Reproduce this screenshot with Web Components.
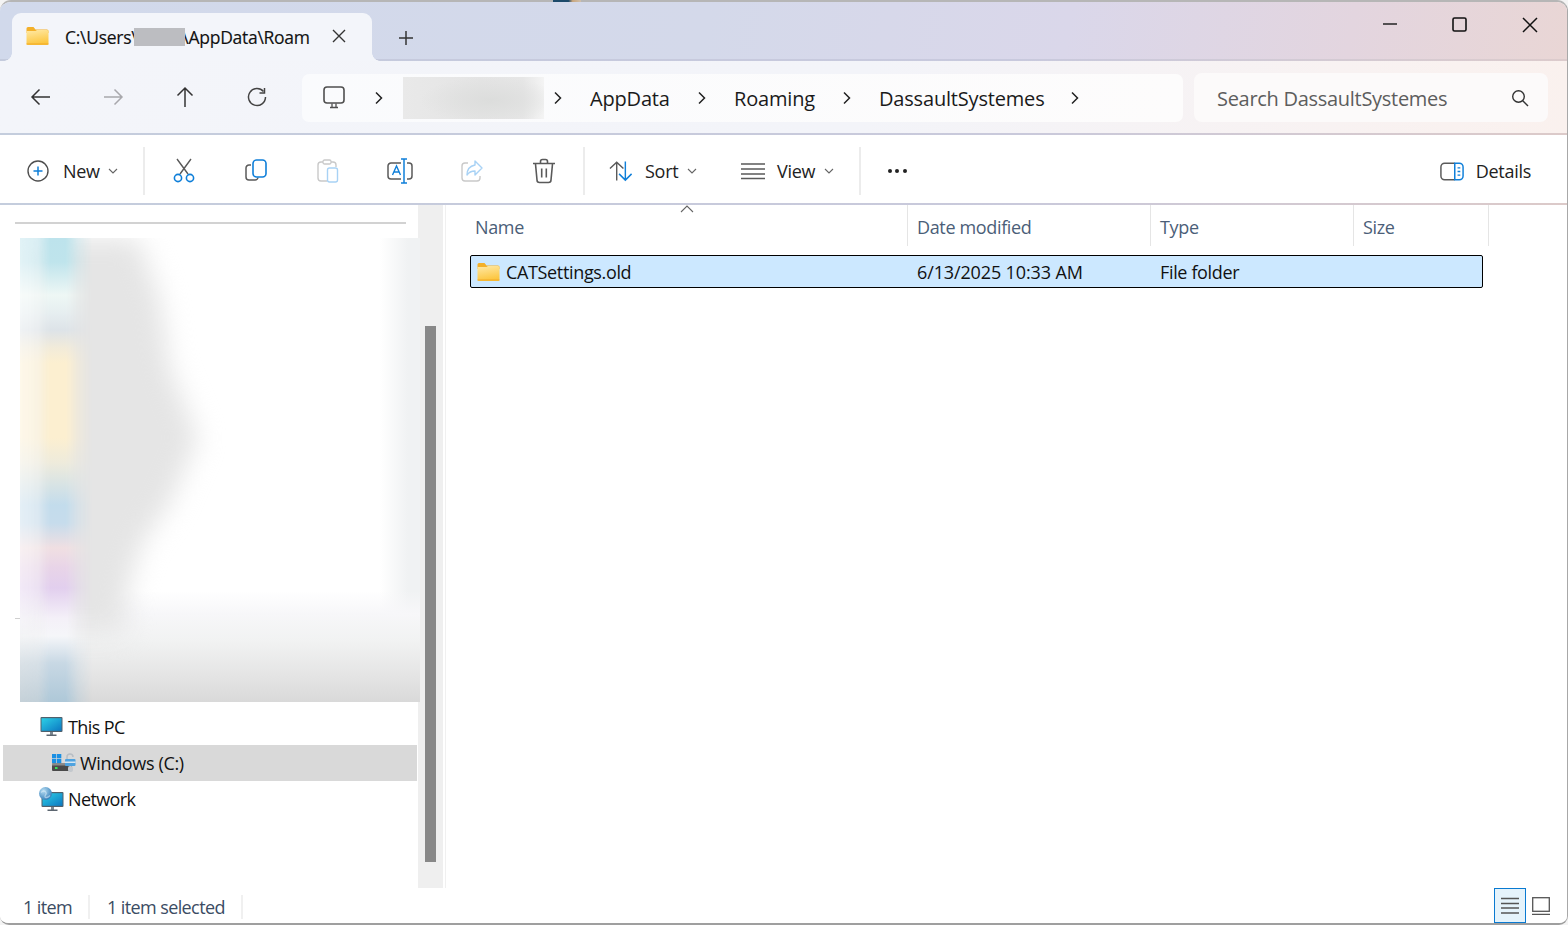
<!DOCTYPE html>
<html lang="en"><head><meta charset="utf-8"><title>File Explorer</title>
<style>
html,body{margin:0;padding:0;width:1568px;height:925px;overflow:hidden;background:#f4f4f4;font-family:"Open Sans","Noto Sans",sans-serif}
fm-peek{position:absolute;left:553px;top:0;width:28px;height:2px;z-index:5}
</style></head>
<body>
<fm-peek></fm-peek>
<fm-window>
  <fm-titlebar></fm-titlebar>
  <fm-navbar></fm-navbar>
  <fm-commandbar></fm-commandbar>
  <fm-main>
    <fm-sidebar></fm-sidebar>
    <fm-list></fm-list>
  </fm-main>
  <fm-status></fm-status>
</fm-window>
<script>
const FOLDER=(w,h,id)=>`<svg width="${w}" height="${h}" viewBox="0 0 22 18"><defs><linearGradient id="${id}" x1="0" y1="0" x2="0.25" y2="1"><stop offset="0" stop-color="#ffe9a6"/><stop offset="1" stop-color="#fcc63f"/></linearGradient></defs><path d="M0 1.5A1.5 1.5 0 0 1 1.5 0H7l2 2.5h11.5A1.5 1.5 0 0 1 22 4v2H0z" fill="#f3b02a"/><path d="M0 4h9l1.5-1H20.500A1.500 1.500 0 0 1 22 4.500V16.500A1.500 1.500 0 0 1 20.500 18H1.500A1.500 1.500 0 0 1 0 16.500z" fill="url(#${id})"/><path d="M0 17h22" stroke="#f0a928" stroke-width="1"/></svg>`;
const G='#5a5a5a',B='#0f7fd9',LG='#c9c9c9',LB='#a8d2f5';
const ICON={
 back:`<svg width="22" height="20" viewBox="0 0 22 20" fill="none" stroke="#333" stroke-width="1.500"><path d="M20 10H2M9.500 2.500 2 10l7.500 7.500"/></svg>`,
 fwd:`<svg width="22" height="20" viewBox="0 0 22 20" fill="none" stroke="#a8a8ac" stroke-width="1.500"><path d="M2 10h18M12.500 2.500 20 10l-7.500 7.500"/></svg>`,
 up:`<svg width="20" height="22" viewBox="0 0 20 22" fill="none" stroke="#333" stroke-width="1.500"><path d="M10 21V2M2.500 9.500 10 2l7.500 7.500"/></svg>`,
 refresh:`<svg width="20" height="20" viewBox="0 0 20 20" fill="none" stroke="#444" stroke-width="1.500"><path d="M16.500 4.500A8.500 8.500 0 1 0 18.500 10"/><path d="M17.500 1v5h-5"/></svg>`,
 monitor:`<svg width="24" height="24" viewBox="0 0 24 24" fill="none" stroke="#4f4f4f" stroke-width="1.600"><rect x="2" y="2" width="20" height="16" rx="3"/><path d="M8 22.500h8M10 18.500v4M14 18.500v4" stroke-width="1.300"/></svg>`,
 plus:`<svg width="22" height="22" viewBox="0 0 22 22" fill="none"><circle cx="11" cy="11" r="10" stroke="#4f4f4f" stroke-width="1.400"/><path d="M11 6.500v9M6.500 11h9" stroke="${B}" stroke-width="1.500"/></svg>`,
 cut:`<svg width="22" height="26" viewBox="0 0 22 26" fill="none" stroke-width="1.400"><path d="M4 1l11 15M18 1 7 16" stroke="${G}"/><circle cx="5" cy="20" r="3.600" stroke="${B}" stroke-width="1.600"/><circle cx="17" cy="20" r="3.600" stroke="${B}" stroke-width="1.600"/></svg>`,
 copy:`<svg width="22" height="24" viewBox="0 0 22 24" fill="none"><path d="M6 6H4a3 3 0 0 0-3 3v9a3 3 0 0 0 3 3h6a3 3 0 0 0 3-2.500" stroke="${G}" stroke-width="1.500"/><rect x="8" y="1" width="13" height="17" rx="3.500" stroke="${B}" stroke-width="1.600"/></svg>`,
 paste:`<svg width="22" height="24" viewBox="0 0 22 24" fill="none"><path d="M10 22H4a3 3 0 0 1-3-3V6a3 3 0 0 1 3-3h12a3 3 0 0 1 3 3v2" stroke="${LG}" stroke-width="1.400"/><rect x="6" y="1" width="8" height="4" rx="1.500" fill="#fff" stroke="${LG}" stroke-width="1.300"/><rect x="10.500" y="9" width="10" height="14" rx="2" stroke="${LB}" stroke-width="1.400"/></svg>`,
 rename:`<svg width="26" height="26" viewBox="0 0 26 26" fill="none"><path d="M14 5H4a3 3 0 0 0-3 3v10a3 3 0 0 0 3 3h10M20 5h2a3 3 0 0 1 3 3v10a3 3 0 0 1-3 3h-2" stroke="${G}" stroke-width="1.500"/><path d="M14 1h6M17 1v24M14 25h6" stroke="${B}" stroke-width="1.500"/><path d="M5.500 17 9.500 8l4 9M7 14h5" stroke="${B}" stroke-width="1.400"/></svg>`,
 share:`<svg width="24" height="24" viewBox="0 0 24 24" fill="none"><path d="M8 4H5a3 3 0 0 0-3 3v12a3 3 0 0 0 3 3h12a3 3 0 0 0 3-3v-2" stroke="${LG}" stroke-width="1.400"/><path d="M15 2l7 7-7 7v-4c-4 0-6 1-8 4 0-5 3-9 8-10z" stroke="${LB}" stroke-width="1.400" stroke-linejoin="round"/></svg>`,
 trash:`<svg width="24" height="26" viewBox="0 0 24 26" fill="none" stroke="${G}" stroke-width="1.600"><path d="M1 5.500h22M8.500 5V3.500a2 2 0 0 1 2-2h3a2 2 0 0 1 2 2V5M3.500 6l1.500 16a2.500 2.500 0 0 0 2.500 2.500h9a2.500 2.500 0 0 0 2.500-2.500L20.500 6M9.700 10.500v9M14.300 10.500v9"/></svg>`,
 sort:`<svg width="25" height="22" viewBox="0 0 26 22" fill="none" stroke-width="1.500"><path d="M8 21V2M1 8.500 8 2l7 6.500" stroke="${G}"/><path d="M17 1v19M10.500 14l6.500 6.500 6.500-6.500" stroke="${B}"/></svg>`,
 view:`<svg width="26" height="18" viewBox="0 0 26 18" fill="none" stroke="${G}" stroke-width="1.500"><path d="M1 2h24M1 7h24M1 12h24M1 16.500h24"/></svg>`,
 details:`<svg width="24" height="19" viewBox="0 0 26 20" fill="none"><path d="M16 1H5a4 4 0 0 0-4 4v10a4 4 0 0 0 4 4h11" stroke="${G}" stroke-width="1.600"/><path d="M16 1h5a4 4 0 0 1 4 4v10a4 4 0 0 1-4 4h-5z" stroke="${B}" stroke-width="1.600"/><path d="M19 6h3M19 10h3M19 14h3" stroke="${B}" stroke-width="1.400"/></svg>`,
 pc:`<svg width="24" height="20" viewBox="0 0 24 20"><defs><linearGradient id="pcg" x1="0" y1="0" x2="1" y2="1"><stop offset="0" stop-color="#2cd0e6"/><stop offset="1" stop-color="#0c78c2"/></linearGradient></defs><rect x=".500" y="0" width="22" height="15" rx="1" fill="#50606c"/><rect x="1.500" y="1.200" width="20" height="12.600" fill="url(#pcg)"/><rect x="10" y="15" width="3" height="3" fill="#7c8892"/><rect x="6.500" y="17.500" width="10" height="1.500" fill="#5c6670"/></svg>`,
 drive:`<svg width="25" height="20" viewBox="0 0 25 20"><g fill="#1a8fe3"><rect x="1" y="1" width="4.300" height="4.300"/><rect x="6" y="1" width="4.300" height="4.300"/><rect x="1" y="6" width="4.300" height="4.300"/><rect x="6" y="6" width="4.300" height="4.300"/></g><rect x="1" y="10.500" width="20" height="7.500" rx="1" fill="#4a4a4a"/><rect x="1" y="10.500" width="20" height="2" fill="#8a8a8a"/><rect x="4" y="14" width="2.500" height="2" fill="#3ddc5a"/><path d="M16 6V4a3 3 0 0 1 6 0" fill="none" stroke="#b8bec4" stroke-width="1.500"/><rect x="14" y="6" width="10.500" height="7" rx="1" fill="#4fa3e0"/><rect x="14" y="8.500" width="10.500" height="1.500" fill="#d6e6f2"/><rect x="17" y="13" width="5" height="6" rx="2" fill="#c3c8cd"/></svg>`,
 net:`<svg width="26" height="25" viewBox="0 0 26 25"><defs><linearGradient id="ng" x1="0" y1="0" x2="1" y2="1"><stop offset="0" stop-color="#2cd0e6"/><stop offset="1" stop-color="#0c78c2"/></linearGradient><radialGradient id="gl" cx=".35" cy=".3" r=".8"><stop offset="0" stop-color="#b5dcf2"/><stop offset="1" stop-color="#2a76b4"/></radialGradient></defs><rect x="2.500" y="5" width="22" height="15" rx="1" fill="#50606c"/><rect x="3.500" y="6.200" width="20" height="12.600" fill="url(#ng)"/><rect x="12" y="20" width="3" height="3" fill="#7c8892"/><rect x="8.500" y="22.500" width="10" height="1.500" fill="#5c6670"/><circle cx="6.500" cy="6.500" r="6.500" fill="url(#gl)"/><path d="M2 5.500c2-2 4-2 5 0s-1 2-1 4 3 1 5-1" fill="none" stroke="#dfeff9" stroke-opacity=".55" stroke-width="1.300"/></svg>`
};
const def=(name,html)=>{customElements.define(name,class extends HTMLElement{
  constructor(){super();this.attachShadow({mode:'open'}).innerHTML=typeof html==='function'?html(this):html;}
  connectedCallback(){if(typeof html==='function')this.shadowRoot.innerHTML=html(this);}
});};

def('fm-peek',`<style>:host{display:block;background:linear-gradient(90deg,#1d4a6a 0,#1d4a6a 55%,#c8a67e 70%,#d0c0ac 100%)}</style>`);

def('fm-window',`<style>:host{display:flex;flex-direction:column;box-sizing:border-box;width:1568px;height:925px;background:#fff;border-top:2px solid #b6b6b6;border-right:1px solid #a8a8a8;border-bottom:2px solid #9f9f9f;border-radius:11px 11px 9px 9px;overflow:hidden;color:#1a1a1a;font-family:"Open Sans","Noto Sans",sans-serif}</style><slot></slot>`);

def('fm-titlebar',`<style>
:host{display:flex;box-sizing:border-box;height:59px;flex:none;padding:11px 0 0 12px;align-items:stretch;background:linear-gradient(100deg,#d1d9eb 0%,#d4d9ea 45%,#dad7ea 68%,#e3d5df 86%,#e9d6d5 100%);border-bottom:2px solid;border-image:linear-gradient(90deg,#c4cbdd,#c8c9dd 65%,#dccbcc) 1;position:relative;z-index:1}
.tab{display:flex;align-items:center;box-sizing:border-box;width:360px;height:48px;margin-bottom:-2px;padding:0 0 2px 14px;background:#f3f5fa;border-radius:9px 9px 0 0;position:relative}
.tab::before,.tab::after{content:"";position:absolute;bottom:0;width:8px;height:8px}
.tab::before{left:-8px;background:radial-gradient(circle at 0 0,transparent 7.500px,#f3f5fa 8px)}
.tab::after{right:-8px;background:radial-gradient(circle at 100% 0,transparent 7.500px,#f3f5fa 8px)}
.title{width:246px;margin:2px 0 0 16px;white-space:nowrap;font-size:17.500px;letter-spacing:-.28px;color:#111;display:flex;align-items:center;-webkit-text-stroke:.15px #111}
.red{flex:none;display:inline-block;width:51px;height:18px;background:#bcbdc1;margin:0 -3px 0 -3px;position:relative}
.x{margin-left:21px;display:flex}
.new{display:flex;margin:4px 0 0 26px;align-self:center}
.caps{margin-left:auto;display:flex;align-self:flex-start;margin-top:-11px;padding-right:2px}
.cap{width:70px;height:46px;display:flex;align-items:center;justify-content:center}
</style>
<div class="tab">${FOLDER(23,18,'fa')}<span class="title">C:\\Users\\<span class="red"></span>\\AppData\\Roam</span>
<svg class="x" width="14" height="14" viewBox="0 0 14 14" fill="none" stroke="#333" stroke-width="1.400"><path d="M1 1l12 12M13 1 1 13"/></svg></div>
<svg class="new" width="16" height="16" viewBox="0 0 16 16" fill="none" stroke="#333" stroke-width="1.500"><path d="M8 1v14M1 8h14"/></svg>
<div class="caps">
<div class="cap"><svg width="16" height="2" viewBox="0 0 16 2" style="margin-top:-2px"><path d="M1 1h14" stroke="#222" stroke-width="1.500"/></svg></div>
<div class="cap"><svg width="15" height="15" viewBox="0 0 15 15" fill="none" style="margin:-1px 2px 0 0"><rect x="1" y="1" width="13" height="13" rx="1.500" stroke="#111" stroke-width="1.600"/></svg></div>
<div class="cap"><svg width="16" height="16" viewBox="0 0 16 16" fill="none" style="margin-top:-1px"><path d="M1 1l14 14M15 1 1 15" stroke="#111" stroke-width="1.500"/></svg></div>
</div>`);

def('fm-navbtn',h=>`<style>:host{display:flex;flex:none;width:72px;height:100%;align-items:center;justify-content:center}</style>${ICON[h.getAttribute('icon')]||''}`);

const CHEV=`<svg width="10" height="14" viewBox="0 0 10 14" fill="none" stroke="#222" stroke-width="1.500"><path d="M2 1.500 7.500 7 2 12.500"/></svg>`;
def('fm-crumb',h=>`<style>:host{display:flex;flex:none;box-sizing:border-box;align-items:center;justify-content:space-between;height:100%;font-size:20px;letter-spacing:-.18px;color:#1a1a1a;padding-right:var(--pr,27px)}</style><span><slot></slot></span>${CHEV}`);

def('fm-navbar',`<style>
:host{display:flex;flex:none;box-sizing:border-box;height:74px;padding:0 0 0 5px;align-items:center;background:linear-gradient(100deg,#f3f5fa 0%,#f3f4f9 55%,#f8f2f2 85%,#faf1ee 100%);border-bottom:2px solid;border-image:linear-gradient(90deg,#c4cddd,#c9c9db 65%,#dccac9) 1}
.btns{display:flex;height:100%}
.addr{display:flex;align-items:center;box-sizing:border-box;width:881px;height:48px;margin:2px 0 0 9px;background:linear-gradient(90deg,#fafbfd,#fdfcfc);border-radius:7px}
.mon{display:flex;margin-left:20px;margin-top:-2px}
.c1{display:flex;margin-left:28px;margin-right:19px}
.blur{width:141px;height:42px;flex:none;background:radial-gradient(ellipse 50% 55% at 62% 55%,#dcdddc,transparent),linear-gradient(90deg,#e9e9e9,#e4e4e4 55%,#e6e6e6 85%,#f4f4f4);margin-right:9px}
.c2{display:flex;margin-right:27px}
.search{display:flex;align-items:center;box-sizing:border-box;width:354px;height:49px;margin:1px 0 0 11px;padding:2px 19px 0 23px;background:#fcfafa;border-radius:8px;font-size:20px;letter-spacing:-.29px;color:#5d5d5d}
.search svg{margin-left:auto;margin-top:-2px}
</style>
<div class="btns"><fm-navbtn icon="back"></fm-navbtn><fm-navbtn icon="fwd"></fm-navbtn><fm-navbtn icon="up"></fm-navbtn><fm-navbtn icon="refresh"></fm-navbtn></div>
<div class="addr"><span class="mon">${ICON.monitor}</span><span class="c1">${CHEV}</span><div class="blur"></div><span class="c2">${CHEV}</span>
<fm-crumb style="width:144px">AppData</fm-crumb><fm-crumb style="width:145px">Roaming</fm-crumb><fm-crumb style="width:201px;--pr:0px">DassaultSystemes</fm-crumb></div>
<div class="search">Search DassaultSystemes<svg width="18" height="18" viewBox="0 0 18 18" fill="none" stroke="#333" stroke-width="1.400"><circle cx="7.500" cy="7.500" r="5.800"/><path d="m11.500 11.500 5.500 5.500"/></svg></div>`);

def('fm-cmdicon',h=>`<style>:host{display:flex;flex:none;width:72px;height:100%;align-items:center;justify-content:center}</style>${ICON[h.getAttribute('icon')]}`);

const CARET=`<svg width="10" height="6" viewBox="0 0 10 6" fill="none" stroke="#666" stroke-width="1.100"><path d="M1 1l4 4 4-4"/></svg>`;
def('fm-commandbar',`<style>
:host{display:flex;flex:none;box-sizing:border-box;height:70px;padding-top:4px;align-items:center;background:#fff;border-bottom:2px solid;border-image:linear-gradient(90deg,#c4cddd,#c9c9db 65%,#dccac9) 1;font-size:18px;letter-spacing:-.28px;color:#222}
.sep{width:2px;height:48px;background:#ececec;flex:none}
.grp{display:flex;align-items:center;height:100%;flex:none}
.new{width:143px;box-sizing:border-box;padding-left:27px}
.new span{margin:0 8px 0 14px}
.icons{display:flex;height:100%;margin-left:3px}
.sort{width:153px;box-sizing:border-box;padding-left:22px;margin-left:2px}
.sort span{margin:0 9px 0 11px}
.view{width:119px;box-sizing:border-box;}
.view span{margin:0 9px 0 11px}
.dots{width:72px;display:flex;justify-content:center;gap:3.500px}
.dots i{display:block;width:4px;height:4px;border-radius:50%;background:#222}
.details{margin-left:auto;padding-right:36px}
.details span{margin-left:12px}
</style>
<div class="grp new">${ICON.plus}<span>New</span>${CARET}</div><div class="sep"></div>
<div class="icons"><fm-cmdicon icon="cut"></fm-cmdicon><fm-cmdicon icon="copy"></fm-cmdicon><fm-cmdicon icon="paste"></fm-cmdicon><fm-cmdicon icon="rename"></fm-cmdicon><fm-cmdicon icon="share"></fm-cmdicon><fm-cmdicon icon="trash"></fm-cmdicon></div>
<div class="sep" style="margin-left:3px"></div>
<div class="grp sort">${ICON.sort}<span>Sort</span>${CARET}</div>
<div class="grp view">${ICON.view}<span>View</span>${CARET}</div><div class="sep"></div>
<div class="grp dots"><i></i><i></i><i></i></div>
<div class="grp details">${ICON.details}<span>Details</span></div>`);

def('fm-main',`<style>:host{display:flex;flex:1;min-height:0;background:#fff}</style><slot></slot>`);

def('fm-treerow',h=>`<style>:host{display:flex;align-items:center;box-sizing:border-box;height:36px;margin:0 1px 0 3px;padding-left:calc(36px + var(--i,0px));gap:4px;font-size:18px;letter-spacing:var(--ls,-.6px);color:#111;white-space:nowrap}
:host([sel]){background:#d9d9d9}svg{flex:none}.ic{display:flex;width:25px;justify-content:center}</style><span class="ic">${ICON[h.getAttribute('icon')]||''}</span><span><slot></slot></span>`);

def('fm-sidebar',`<style>
:host{display:flex;flex:none;box-sizing:border-box;width:446px;height:100%;background:linear-gradient(#cfcfcf,#cfcfcf) no-repeat 15px 413px/6px 1px,#fff;position:relative}
.nav{width:418px;flex:none;display:flex;flex-direction:column;position:relative;z-index:1}
.line{height:2px;margin:17px 12px 0 15px;background:#d2d2d2}
.blurred{width:400px;height:464px;margin:14px 0 7px 20px;flex:none;display:grid;overflow:hidden;background:linear-gradient(90deg,rgba(240,242,243,0) 90%,#f0f2f3 97%),#fff}
.blurred>*{grid-area:1/1;min-width:0}
.grayw{filter:blur(13px);height:464px}
.gray{height:464px;background:#e5e5e5;clip-path:polygon(25px 0,118px 0,140px 60px,150px 130px,178px 200px,150px 265px,122px 305px,108px 350px,105px 395px,25px 395px)}
.band{height:464px;background:linear-gradient(rgba(250,250,252,0) 76%,#f7f7f9 81%,#f1f2f2 87%,#e5e5e5 94%,#d9d9d9 100%)}
.col{width:72px;height:464px;background:linear-gradient(#bde3ec 0,#bfe4ec 24px,#eef7f5 57px,#e6eef0 75px,#dde3e8 92px,#f2ebd9 110px,#fcefd0 125px,#fcefd0 200px,#eeebdc 225px,#c3dcec 267px,#c6dcec 285px,#f0dfe2 310px,#e8d4e8 330px,#e2cfee 350px,#f4f0f8 380px,#f5f6f9 398px,#c8d8e4 425px,#aec8d8 464px);
 -webkit-mask-image:linear-gradient(90deg,rgba(0,0,0,.45) 0,rgba(0,0,0,.55) 18px,#000 30px,#000 46px,rgba(0,0,0,.4) 58px,transparent 72px);mask-image:linear-gradient(90deg,rgba(0,0,0,.45) 0,rgba(0,0,0,.55) 18px,#000 30px,#000 46px,rgba(0,0,0,.4) 58px,transparent 72px)}
.track{width:25px;flex:none;background:#efefef;position:relative}
.thumb{position:absolute;left:7px;top:121px;width:11px;height:536px;background:#888}
.edge{width:3px;flex:none;position:relative}
.edge::after{content:"";position:absolute;left:2px;top:0;bottom:0;width:1px;background:#f0f0f0}
</style>
<div class="nav"><div class="line"></div><div class="blurred"><div class="grayw"><div class="gray"></div></div><div class="band"></div><div class="col"></div></div>
<fm-treerow icon="pc">This PC</fm-treerow>
<fm-treerow icon="drive" sel style="--i:12px;--ls:-.35px">Windows (C:)</fm-treerow>
<fm-treerow icon="net">Network</fm-treerow></div>
<div class="track"><div class="thumb"></div></div><div class="edge"></div>`);

def('fm-list',`<style>
:host{display:block;flex:1;min-width:0;position:relative;font-size:18px;letter-spacing:-.35px}
.head{display:flex;height:41px;margin-left:20px;color:#4b5e78;align-items:center}
.head div{height:100%;box-sizing:border-box;padding:2px 0 0 9px;border-right:1px solid #e5e5e5;display:flex;align-items:center;flex:none;position:relative}
.caret{position:absolute;left:214px;top:0}
.row{display:flex;align-items:center;box-sizing:border-box;width:1013px;height:33px;margin:9px 0 0 24px;background:#cce8ff;border:1px solid #000;border-radius:2px;color:#111;white-space:nowrap}
.n{display:flex;align-items:center;gap:6px;width:446px;box-sizing:border-box;padding-left:6px;flex:none}
.d{width:243px;flex:none;letter-spacing:-.13px}
</style>
<div class="head"><div style="width:442px">Name<svg class="caret" width="14" height="8" viewBox="0 0 14 8" fill="none" stroke="#666" stroke-width="1.100"><path d="M1 7l6-6 6 6"/></svg></div><div style="width:243px">Date modified</div><div style="width:203px">Type</div><div style="width:135px">Size</div></div>
<div class="row"><div class="n">${FOLDER(23,18,'fb')}<span>CATSettings.old</span></div><div class="d">6/13/2025 10:33 AM</div><div>File folder</div></div>`);

def('fm-status',`<style>
:host{display:flex;flex:none;box-sizing:border-box;height:35px;align-items:center;padding-left:23px;background:#fff;font-size:18px;letter-spacing:-.6px;color:#3b4c63}
.c{display:flex;align-items:center;height:24px;box-sizing:border-box;border-right:2px solid #f0f0f0;margin-top:2px}
.btns{display:flex;margin-left:auto;height:100%;padding-right:17px}
.b1{width:32px;height:35px;box-sizing:border-box;background:#e5f3fb;border:1.500px solid #0a7ad1;display:flex;align-items:center;justify-content:center}
.b2{display:flex;align-items:center;margin-left:6px}
</style>
<div class="c" style="width:67px">1 item</div><div class="c" style="width:153px;padding-left:17px">1 item selected</div>
<div class="btns"><div class="b1"><svg width="20" height="17" viewBox="0 0 20 17" stroke="#555" stroke-width="1.300"><path d="M1 1.500h18M1 6.500h18M1 11h18M1 16h18"/></svg></div>
<div class="b2"><svg width="18" height="18" viewBox="0 0 18 18" fill="none" stroke="#555" stroke-width="1.300"><rect x=".7" y=".7" width="16.600" height="13.600"/><path d="M0 17.300h18"/></svg></div></div>`);
</script>
</body></html>
